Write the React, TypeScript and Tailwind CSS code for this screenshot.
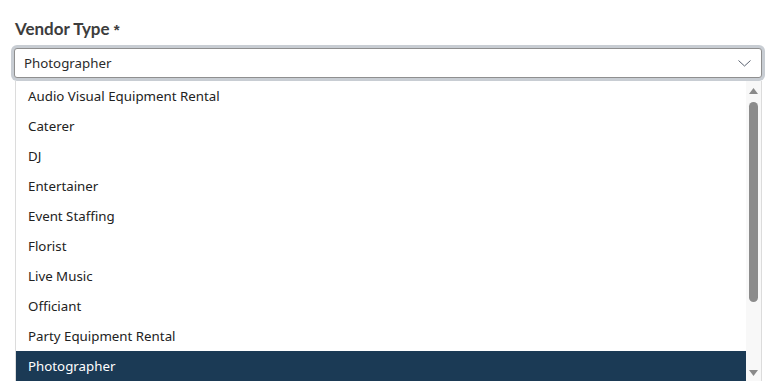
import React from "react";

const options = [
  "Audio Visual Equipment Rental",
  "Caterer",
  "DJ",
  "Entertainer",
  "Event Staffing",
  "Florist",
  "Live Music",
  "Officiant",
  "Party Equipment Rental",
  "Photographer",
];

export default function App() {
  return (
    <div className="h-[381px] w-[783px] overflow-hidden bg-white pl-[14px] pr-[21px] pt-[19px]">
      <label className="block h-[20px] pl-[1px] font-['Lato',sans-serif] text-[17px] font-bold leading-[20px] text-[#3d3d3d]">
        Vendor Type <span className="font-['Liberation_Sans',sans-serif] text-[15px]">*</span>
      </label>
      <div className="mt-[9px] flex h-[30px] items-center justify-between rounded-[3px] border border-[#8f8f8f] bg-white pl-[9px] pr-[9px] pt-[2px] font-['Noto_Sans',sans-serif] text-[13.3px] text-[#2b2b2b] shadow-[0_0_0_3px_#c8cdd3]">
        <span>Photographer</span>
        <svg width="13" height="7" viewBox="0 0 13 7" fill="none" className="mb-[2px] mr-[1px]">
          <path d="M0.5 0.5L6.5 6L12.5 0.5" stroke="#5a6270" strokeWidth="1" />
        </svg>
      </div>
      <div className="ml-[1px] mt-[3px] flex h-[300px] border-l border-r border-[#dcdcdc] bg-white">
        <ul className="flex-1 font-['Noto_Sans',sans-serif] text-[13.3px] text-[#222]">
          {options.map((o) => (
            <li
              key={o}
              className={
                o === "Photographer"
                  ? "flex h-[30px] items-center bg-[#1b3a55] pl-[12px] pt-[2px] text-white"
                  : "flex h-[30px] items-center pl-[12px] pt-[2px]"
              }
            >
              {o}
            </li>
          ))}
        </ul>
        <div className="flex w-[15px] flex-col items-center bg-[#f8f8f8]">
          <svg width="9" height="6" viewBox="0 0 9 6" className="mt-[7px]">
            <path d="M0 6L4.5 0L9 6Z" fill="#8a8a8a" />
          </svg>
          <div className="mt-[8px] h-[200px] w-[9px] rounded-full bg-[#8c8c8c]" />
          <div className="flex-1" />
          <svg width="9" height="6" viewBox="0 0 9 6" className="mb-[5px]">
            <path d="M0 0L4.5 6L9 0Z" fill="#8a8a8a" />
          </svg>
        </div>
      </div>
    </div>
  );
}
